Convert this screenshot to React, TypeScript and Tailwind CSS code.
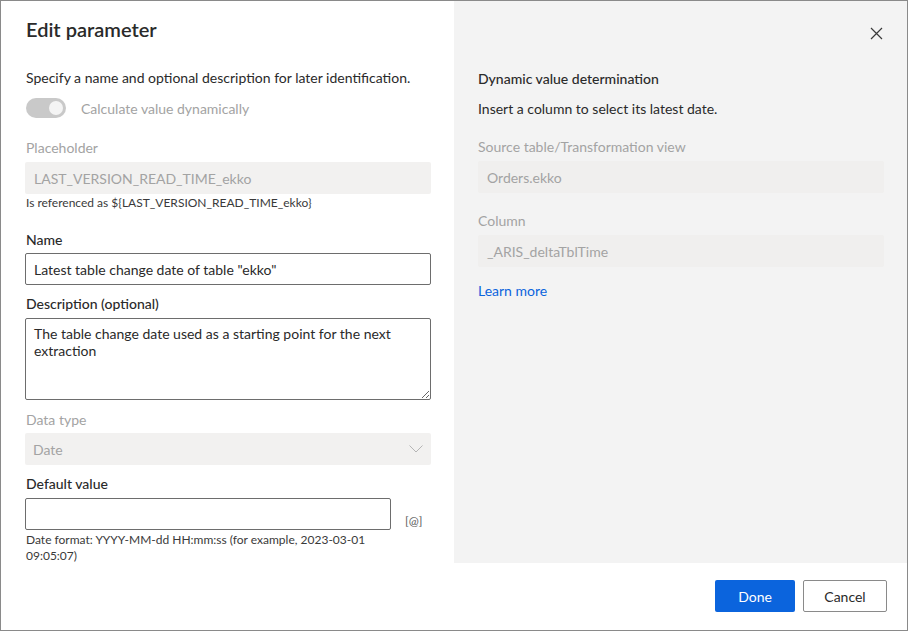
import React from 'react';

const Label: React.FC<{ children: React.ReactNode; muted?: boolean; className?: string }> = ({ children, muted, className = '' }) => (
  <div className={`text-[14px] leading-[20px] ${muted ? 'text-[#a3a3a3]' : 'text-[#2a2a2a] font-medium'} ${className}`}>{children}</div>
);

const ReadOnlyBox: React.FC<{ children: React.ReactNode; className?: string }> = ({ children, className = '' }) => (
  <div className={`h-[32px] flex items-center px-[9px] text-[14px] text-[#a3a3a3] rounded-[2px] ${className}`}>{children}</div>
);

export default function App() {
  return (
    <div className="w-[908px] h-[631px] border border-[#8a8a8a] bg-white flex flex-col text-[#2a2a2a]" style={{ fontFamily: 'Lato, "Open Sans", sans-serif' }}>
      <div className="flex h-[562px]">
        {/* left: form */}
        <div className="w-[453px] pl-[24px] pr-[23px]">
          <h1 className="mt-[14px] pl-[1px] text-[20px] leading-[28px] font-semibold text-[#2a2a2a]">Edit parameter</h1>
          <p className="mt-[25px] pl-[1px] text-[14px] leading-[20px]">Specify a name and optional description for later identification.</p>
          <div className="mt-[10px] pl-[1px] flex items-center gap-[15px] h-[20px]">
            <div className="w-[40px] h-[20px] rounded-full bg-[#c9c9c9] flex items-center justify-end pr-[3px]">
              <div className="w-[14px] h-[14px] rounded-full bg-[#f4f4f4]" />
            </div>
            <span className="text-[14px] text-[#a3a3a3]">Calculate value dynamically</span>
          </div>

          <Label muted className="mt-[20px] pl-[1px]">Placeholder</Label>
          <ReadOnlyBox className="mt-[4px] bg-[#f2f1f0]">LAST_VERSION_READ_TIME_ekko</ReadOnlyBox>
          <div className="mt-[1px] pl-[1px] text-[12px] leading-[16px] text-[#3a3a3a]">Is referenced as ${'{'}LAST_VERSION_READ_TIME_ekko{'}'}</div>

          <Label className="mt-[19px] pl-[1px]">Name</Label>
          <input
            readOnly
            value={'Latest table change date of table "ekko"'}
            className="mt-[3px] w-full h-[32px] border border-[#6d6d6d] rounded-[2px] px-[8px] text-[14px] text-[#2a2a2a] outline-none"
            style={{ fontFamily: 'inherit' }}
          />

          <Label className="mt-[9px] pl-[1px]">Description (optional)</Label>
          <textarea
            readOnly
            value="The table change date used as a starting point for the next extraction"
            className="mt-[4px] w-full h-[82px] border border-[#6d6d6d] rounded-[2px] px-[8px] py-[6px] text-[14px] leading-[17px] text-[#2a2a2a] outline-none block"
            style={{ fontFamily: 'inherit' }}
          />

          <Label muted className="mt-[10px] pl-[1px]">Data type</Label>
          <div className="mt-[3px] h-[32px] bg-[#f2f1f0] rounded-[2px] flex items-center justify-between pl-[8px] pr-[8px] text-[14px] text-[#a3a3a3]">
            <span>Date</span>
            <svg width="14" height="8" viewBox="0 0 14 8" fill="none" stroke="#b5b5b5" strokeWidth="1">
              <path d="M0.5 0.5 L7 7 L13.5 0.5" />
            </svg>
          </div>

          <Label className="mt-[9px] pl-[1px]">Default value</Label>
          <div className="mt-[4px] flex items-end gap-[14px]">
            <input className="w-[366px] h-[32px] border border-[#6d6d6d] rounded-[2px] px-[8px] text-[14px] outline-none" />
            <span className="text-[12px] text-[#5a5a5a] leading-[16px] mb-[1px]">[@]</span>
          </div>
          <div className="mt-[2px] pl-[1px] text-[12px] leading-[16px] text-[#3a3a3a]">
            Date format: YYYY-MM-dd HH:mm:ss (for example, 2023-03-01<br />09:05:07)
          </div>
        </div>

        {/* right: dynamic value */}
        <div className="flex-1 bg-[#f3f3f3] pl-[24px] pr-[23px] relative">
          <button className="absolute right-[24px] top-[25px] w-[14px] h-[14px] flex items-center justify-center">
            <svg width="13" height="13" viewBox="0 0 13 13" stroke="#3a3a3a" strokeWidth="1.2">
              <path d="M1 1 L12 12 M12 1 L1 12" />
            </svg>
          </button>
          <Label className="mt-[68px]">Dynamic value determination</Label>
          <p className="mt-[10px] text-[14px] leading-[20px]">Insert a column to select its latest date.</p>

          <Label muted className="mt-[18px]">Source table/Transformation view</Label>
          <ReadOnlyBox className="mt-[4px] bg-[#f0efee]">Orders.ekko</ReadOnlyBox>

          <Label muted className="mt-[18px]">Column</Label>
          <ReadOnlyBox className="mt-[4px] bg-[#f0efee]">_ARIS_deltaTblTime</ReadOnlyBox>

          <a className="block mt-[14px] text-[14px] leading-[20px] text-[#0b64dd]">Learn more</a>
        </div>
      </div>

      {/* footer */}
      <div className="flex-1 flex items-start justify-end gap-[8px] pr-[20px] pt-[17px]">
        <button className="w-[80px] h-[32px] bg-[#0b64dd] text-white text-[14px] rounded-[2px]">Done</button>
        <button className="w-[84px] h-[32px] border border-[#8a8a8a] bg-white text-[#2a2a2a] text-[14px] rounded-[2px]">Cancel</button>
      </div>
    </div>
  );
}
